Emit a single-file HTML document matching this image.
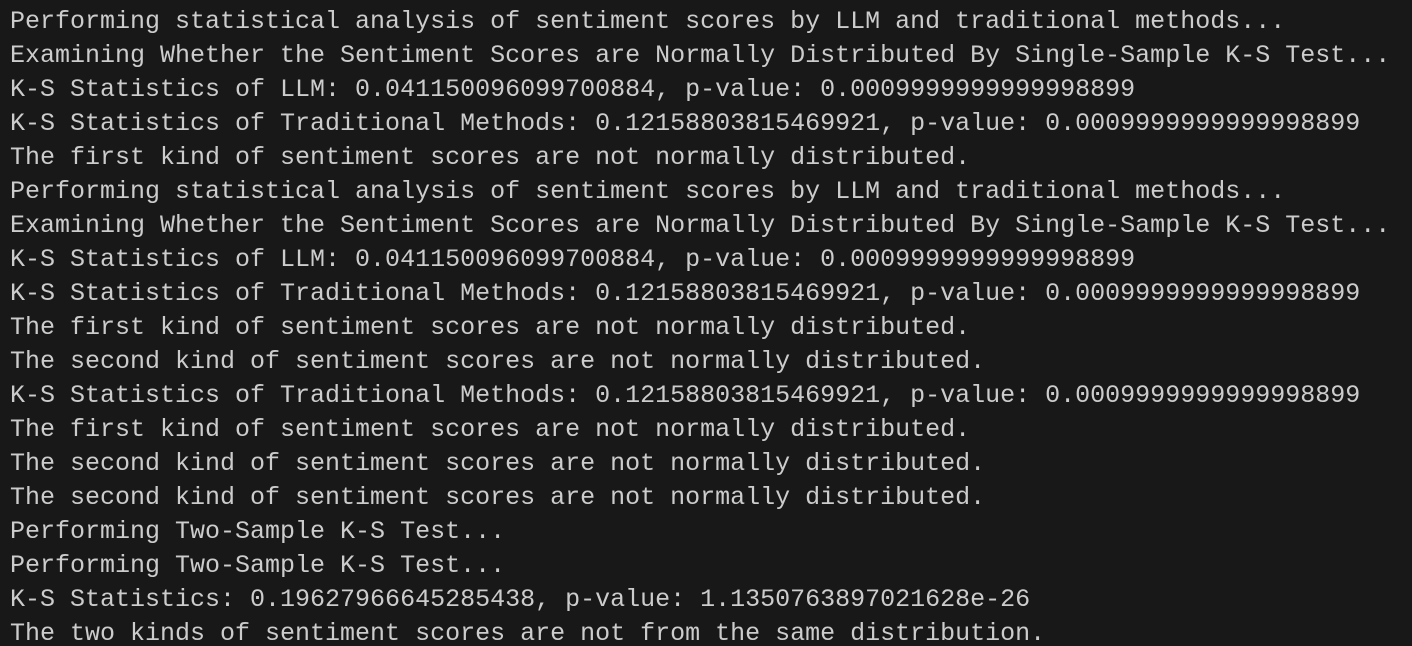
<!DOCTYPE html>
<html><head><meta charset="utf-8"><style>
html,body{margin:0;padding:0;background:#181818;width:1412px;height:646px;overflow:hidden}
pre{margin:0;padding:5px 0 0 10px;font-family:"Liberation Mono",monospace;font-size:25px;line-height:34px;color:#cccccc;white-space:pre}
</style></head><body><pre>Performing statistical analysis of sentiment scores by LLM and traditional methods...
Examining Whether the Sentiment Scores are Normally Distributed By Single-Sample K-S Test...
K-S Statistics of LLM: 0.041150096099700884, p-value: 0.0009999999999998899
K-S Statistics of Traditional Methods: 0.12158803815469921, p-value: 0.0009999999999998899
The first kind of sentiment scores are not normally distributed.
Performing statistical analysis of sentiment scores by LLM and traditional methods...
Examining Whether the Sentiment Scores are Normally Distributed By Single-Sample K-S Test...
K-S Statistics of LLM: 0.041150096099700884, p-value: 0.0009999999999998899
K-S Statistics of Traditional Methods: 0.12158803815469921, p-value: 0.0009999999999998899
The first kind of sentiment scores are not normally distributed.
The second kind of sentiment scores are not normally distributed.
K-S Statistics of Traditional Methods: 0.12158803815469921, p-value: 0.0009999999999998899
The first kind of sentiment scores are not normally distributed.
The second kind of sentiment scores are not normally distributed.
The second kind of sentiment scores are not normally distributed.
Performing Two-Sample K-S Test...
Performing Two-Sample K-S Test...
K-S Statistics: 0.19627966645285438, p-value: 1.1350763897021628e-26
The two kinds of sentiment scores are not from the same distribution.</pre></body></html>
